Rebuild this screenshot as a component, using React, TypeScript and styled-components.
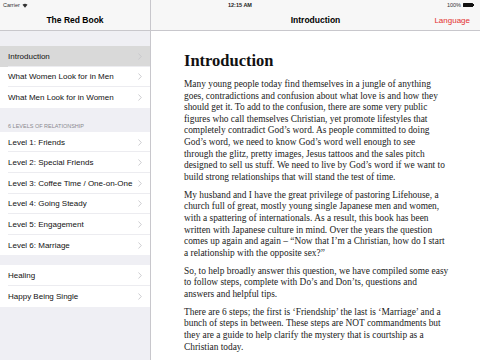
import styled, { createGlobalStyle } from "styled-components"

const GlobalStyle = createGlobalStyle`
  html, body {
    margin: 0;
    padding: 0;
    width: 480px;
    height: 360px;
    overflow: hidden;
    background: #fff;
  }
  * { box-sizing: border-box; }
`

interface Row {
  label: string
  selected?: boolean
}

const groups: { header?: string; rows: Row[] }[] = [
  {
    rows: [
      { label: "Introduction", selected: true },
      { label: "What Women Look for in Men" },
      { label: "What Men Look for in Women" },
    ],
  },
  {
    header: "6 Levels of Relationship",
    rows: [
      { label: "Level 1: Friends" },
      { label: "Level 2: Special Friends" },
      { label: "Level 3: Coffee Time / One-on-One" },
      { label: "Level 4: Going Steady" },
      { label: "Level 5: Engagement" },
      { label: "Level 6: Marriage" },
    ],
  },
  {
    rows: [{ label: "Healing" }, { label: "Happy Being Single" }],
  },
]

// lines kept as in the page, since the book face wraps differently from Times
const paragraphs: string[][] = [
  [
    "Many young people today find themselves in a jungle of anything",
    "goes, contradictions and confusion about what love is and how they",
    "should get it. To add to the confusion, there are some very public",
    "figures who call themselves Christian, yet promote lifestyles that",
    "completely contradict God\u2019s word. As people committed to doing",
    "God\u2019s word, we need to know God\u2019s word well enough to see",
    "through the glitz, pretty images, Jesus tattoos and the sales pitch",
    "designed to sell us stuff. We need to live by God\u2019s word if we want to",
    "build strong relationships that will stand the test of time.",
  ],
  [
    "My husband and I have the great privilege of pastoring Lifehouse, a",
    "church full of great, mostly young single Japanese men and women,",
    "with a spattering of internationals. As a result, this book has been",
    "written with Japanese culture in mind. Over the years the question",
    "comes up again and again \u2013 \u201cNow that I\u2019m a Christian, how do I start",
    "a relationship with the opposite sex?\u201d",
  ],
  [
    "So, to help broadly answer this question, we have compiled some easy",
    "to follow steps, complete with Do\u2019s and Don\u2019ts, questions and",
    "answers and helpful tips.",
  ],
  [
    "There are 6 steps; the first is \u2018Friendship\u2019 the last is \u2018Marriage\u2019 and a",
    "bunch of steps in between. These steps are NOT commandments but",
    "they are a guide to help clarify the mystery that is courtship as a",
    "Christian today.",
  ],
]

function Chevron() {
  return (
    <ChevronIcon width="4" height="7" viewBox="0 0 4 7">
      <path d="M0.5 0.5 L3.3 3.5 L0.5 6.5" fill="none" stroke="#c7c7cc" strokeWidth="0.9" />
    </ChevronIcon>
  )
}

function Wifi() {
  return (
    <svg width="6" height="5" viewBox="0 0 12 10">
      <path d="M6 9.5 L1 3.5 A8 8 0 0 1 11 3.5 Z" fill="#333" />
    </svg>
  )
}

export default function App() {
  return (
    <>
      <GlobalStyle />
      <Screen>
        <Sidebar>
          <NavBar>
            <StatusBar>
              <StatusText>Carrier</StatusText>
              <Wifi />
            </StatusBar>
            <NavTitle>The Red Book</NavTitle>
          </NavBar>
          <TableArea>
            {groups.map((g, gi) => (
              <Group key={gi}>
                {g.header && <SectionHeader>{g.header}</SectionHeader>}
                <Cells>
                  {g.rows.map((r, ri) => (
                    <Cell key={r.label} selected={!!r.selected} last={ri === g.rows.length - 1}>
                      <CellLabel>{r.label}</CellLabel>
                      <Chevron />
                    </Cell>
                  ))}
                </Cells>
              </Group>
            ))}
          </TableArea>
        </Sidebar>
        <Detail>
          <NavBar>
            <StatusBar>
              <Clock>12:15 AM</Clock>
              <Battery>
                <StatusText>100%</StatusText>
                <BatteryBody />
                <BatteryTip />
              </Battery>
            </StatusBar>
            <DetailNav>
              <NavTitle>Introduction</NavTitle>
              <NavButton>Language</NavButton>
            </DetailNav>
          </NavBar>
          <Article>
            <Heading>Introduction</Heading>
            {paragraphs.map((lines, i) => (
              <Paragraph key={i}>
                {lines.map((l, li) => (
                  <Line key={li}>{l}</Line>
                ))}
              </Paragraph>
            ))}
          </Article>
        </Detail>
      </Screen>
    </>
  )
}

const Screen = styled.div`
  display: flex;
  width: 480px;
  height: 360px;
  font-family: "Liberation Sans", Arial, sans-serif;
  color: #000;
`

const Sidebar = styled.div`
  width: 151px;
  flex: none;
  display: flex;
  flex-direction: column;
  background: #efeff4;
  border-right: 1px solid #c8c7cc;
`

const Detail = styled.div`
  flex: 1;
  display: flex;
  flex-direction: column;
  background: #fff;
  min-width: 0;
`

const NavBar = styled.div`
  height: 31px;
  flex: none;
  background: #f7f7f7;
  border-bottom: 1px solid #c8c7cc;
  display: flex;
  flex-direction: column;
`

const StatusBar = styled.div`
  height: 10px;
  display: flex;
  align-items: center;
  gap: 2px;
  padding: 0 3px;
  position: relative;
`

const StatusText = styled.span`
  font-size: 5.5px;
  color: #333;
`

const Clock = styled.span`
  font-size: 5.5px;
  font-weight: bold;
  color: #222;
  position: absolute;
  left: 77px;
  top: 2px;
`

const Battery = styled.div`
  margin-left: auto;
  display: flex;
  align-items: center;
  gap: 2px;
  padding-right: 3px;
`

const BatteryBody = styled.span`
  width: 10px;
  height: 4px;
  background: #111;
  border-radius: 0.5px;
`

const BatteryTip = styled.span`
  width: 1px;
  height: 2px;
  background: #111;
  margin-left: -2px;
`

const NavTitle = styled.div`
  flex: 1;
  display: flex;
  align-items: center;
  justify-content: center;
  font-size: 8.5px;
  font-weight: bold;
  color: #000;
  padding-bottom: 1px;
`

const DetailNav = styled.div`
  flex: 1;
  display: flex;
  align-items: center;
  position: relative;
`

const NavButton = styled.span`
  position: absolute;
  right: 10px;
  top: 6px;
  font-size: 8px;
  color: #e3302f;
`

const TableArea = styled.div`
  flex: 1;
  padding-top: 15px;
`

const Group = styled.div`
  & + & {
    margin-top: 10px;
  }
`

const SectionHeader = styled.div`
  height: 14px;
  margin-top: 1px;
  padding: 5px 0 0 8px;
  font-size: 5.5px;
  color: #8a8a8f;
  text-transform: uppercase;
`

const Cells = styled.div`
  background: #fff;
`

const Cell = styled.div<{ selected: boolean; last: boolean }>`
  height: 20.6px;
  display: flex;
  align-items: center;
  padding: 0 8px 0 8px;
  background: ${(p) => (p.selected ? "#d9d9d9" : "#fff")};
  position: relative;

  &::after {
    content: "";
    display: ${(p) => (p.last ? "none" : "block")};
    position: absolute;
    left: 8px;
    right: 0;
    bottom: 0;
    height: 1px;
    background: #ececf0;
  }
`

const CellLabel = styled.span`
  flex: 1;
  font-size: 8px;
  color: #111;
  white-space: nowrap;
`

const ChevronIcon = styled.svg`
  flex: none;
`

const Article = styled.div`
  padding: 20px 20px 0 33px;
  font-family: "Liberation Serif", "Times New Roman", serif;
  color: #222;
`

const Heading = styled.h1`
  margin: 0 0 8px;
  font-size: 16.5px;
  font-weight: bold;
  line-height: 20px;
  color: #111;
`

const Paragraph = styled.p`
  margin: 0 0 6.4px;
  font-size: 9.4px;
  line-height: 11.6px;
`

const Line = styled.span`
  display: block;
  white-space: nowrap;
`
